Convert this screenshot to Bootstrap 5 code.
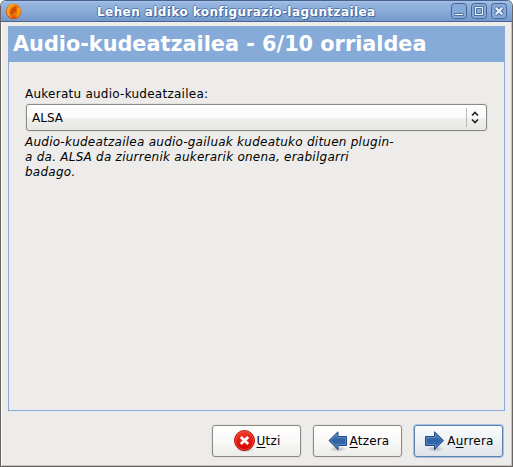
<!DOCTYPE html>
<html lang="eu">
<head>
<meta charset="utf-8">
<title>Lehen aldiko konfigurazio-laguntzailea</title>
<meta name="viewport" content="width=device-width, initial-scale=1">
<link href="https://cdn.jsdelivr.net/npm/bootstrap@5.3.0/dist/css/bootstrap.min.css" rel="stylesheet">
<style>
body{font:12px/15px "DejaVu Sans",sans-serif;color:#000;background:#fff}
.win{width:513px;height:467px;background:#edecea;border:1px solid #696565;border-top-color:#45618c;border-radius:6px 6px 0 0;box-shadow:inset 1px 0 #fbfafa,inset -1px -1px #c5c1c0}
.titlebar{height:21px;flex:none;background:linear-gradient(#a9c5eb 0,#98b6e0 2px,#84a8d6 12px,#7499ca);border-bottom:1px solid #46658f;border-radius:5px 5px 0 0;padding:0 5px 0 4px}
.caption{font-weight:bold;font-size:12px;letter-spacing:.42px;color:#fff;text-shadow:1px 1px #3f66a0,-1px 0 #5479ae,0 -1px #5479ae;white-space:nowrap;padding:2px 0 0 92px;margin-left:-17px}
.winbtn{width:16px;height:16px;display:block}
.wizard{margin:4px 7px 0;height:385px;border:1px solid #86abd9;flex:none}
.heading{height:35px;background:#86abd9;color:#fff;font-weight:bold;font-size:20.8px;line-height:34px;padding-left:4px;margin:0;white-space:nowrap}
.page-body{padding:25px 17px 0 16px}
.field-label,.hint{letter-spacing:.25px}
.combo{height:27px;border:1px solid #8b8984;border-radius:3px;background:linear-gradient(#fff,#fafafa 50%,#f0f0ee 51%,#e6e6e3);margin:2px 0 0 1px;padding-left:5px;box-shadow:0 0 0 1px #e3e2df}
.combo .choice{padding-top:1px}
.divider{width:1px;height:19px;background:#b9b8b5}
.hint{font-style:italic;margin:4px 0 0;white-space:nowrap}
.actions{gap:12px;padding:14px 9px 0 0}
.actions .btn{width:89px;height:32px;padding:0;border:1px solid #8b8984;border-radius:3px;background:linear-gradient(#fff,#f9f9f8 50%,#ececea);font:12px/15px "DejaVu Sans",sans-serif;letter-spacing:.2px;color:#000;box-shadow:0 0 0 1px #e3e2df}
.actions .btn.next{border-color:#5d7fae;background:linear-gradient(#fafcfe,#eef1f5 50%,#dfe4ea);box-shadow:0 0 0 1px #a9c3e6}
.actions u{text-underline-offset:2px;text-decoration-thickness:1px;text-decoration-skip-ink:none}
</style>
<script src="https://cdn.jsdelivr.net/npm/bootstrap@5.3.0/dist/js/bootstrap.bundle.min.js"></script>
</head>
<body class="overflow-hidden">
<svg width="0" height="0" class="position-absolute"><defs>
<radialGradient id="orb" cx=".6" cy=".4"><stop offset="0" stop-color="#e55b00"/><stop offset=".55" stop-color="#f07f08"/><stop offset="1" stop-color="#d95108"/></radialGradient>
<linearGradient id="red" x2="0" y2="1"><stop stop-color="#f43a25"/><stop offset="1" stop-color="#d50000"/></linearGradient>
<linearGradient id="blue" x2="0" y2="1"><stop stop-color="#4d7db8"/><stop offset=".5" stop-color="#2f62a3"/><stop offset="1" stop-color="#3f72b0"/></linearGradient>
<radialGradient id="shade"><stop stop-color="#000" stop-opacity=".25"/><stop offset="1" stop-color="#000" stop-opacity="0"/></radialGradient>
</defs></svg>
<main class="win d-flex flex-column">
  <header class="titlebar d-flex align-items-center">
    <svg width="17" height="17" viewBox="0 0 17 17"><circle cx="8.5" cy="8.5" r="7.7" fill="url(#orb)"/><path d="M2 6C3 2 7 0 11 1.500Q5 3 4.500 8T8 15Q0 13 2 6" fill="#f7a51c"/><path d="M15 5Q17 11 11 15 13 10 12 5z" fill="#f3a014"/><path d="M11 4Q5 5 6 11 11 10 11 4z" fill="#d94d00" stroke="#b84300" stroke-width=".7"/></svg>
    <span class="caption">Lehen aldiko konfigurazio-laguntzailea</span>
    <span class="d-flex ms-auto gap-1">
      <svg class="winbtn" viewBox="0 0 16 16"><rect x=".5" y=".5" width="15" height="15" rx="3" fill="#86a9d8" stroke="#446797"/><path d="M3.500 10.500h9v2h-9z" fill="#fff" stroke="#4c71a5"/></svg>
      <svg class="winbtn" viewBox="0 0 16 16"><rect x=".5" y=".5" width="15" height="15" rx="3" fill="#86a9d8" stroke="#446797"/><path d="M3.500 3.500h9v9h-9z" fill="#e9f0f9" stroke="#4c71a5"/><path d="M5.500 5.500h5v5h-5z" fill="#86a9d8" stroke="#4c71a5"/></svg>
      <svg class="winbtn" viewBox="0 0 16 16"><rect x=".5" y=".5" width="15" height="15" rx="3" fill="#86a9d8" stroke="#446797"/><path d="M4.500 4.500l7 7m0-7l-7 7" stroke="#4c71a5" stroke-width="4.200"/><path d="M4.800 4.800l6.400 6.400m0-6.400l-6.400 6.400" stroke="#e9f0f9" stroke-width="2.200"/></svg>
    </span>
  </header>
  <section class="wizard">
    <h1 class="heading">Audio-kudeatzailea - 6/10 orrialdea</h1>
    <div class="page-body">
      <div class="field-label">Aukeratu audio-kudeatzailea:</div>
      <div class="combo d-flex align-items-center" role="combobox">
        <span class="choice me-auto">ALSA</span><span class="divider"></span>
        <svg width="19" height="19" viewBox="0 0 19 19"><path d="M5 7.500l3-3 3 3M5 11.500l3 3 3-3" fill="none" stroke="#222" stroke-width="1.600"/></svg>
      </div>
      <p class="hint">Audio-kudeatzailea audio-gailuak kudeatuko dituen plugin-<br>a da. ALSA da ziurrenik aukerarik onena, erabilgarri<br>badago.</p>
    </div>
  </section>
  <footer class="actions d-flex justify-content-end">
    <button class="btn d-flex align-items-center justify-content-center"><svg width="24" height="24" viewBox="0 0 24 24"><ellipse cx="12" cy="20.500" rx="10" ry="3" fill="url(#shade)"/><circle cx="11.500" cy="11.500" r="10" fill="url(#red)" stroke="#b80d08"/><circle cx="11.500" cy="11.500" r="9" fill="none" stroke="#f46659" stroke-opacity=".6"/><path d="M7.800 8l7.400 7m0-7l-7.400 7" stroke="#fff" stroke-width="2.800"/></svg><span><u>U</u>tzi</span></button>
    <button class="btn d-flex align-items-center justify-content-center"><svg width="24" height="24" viewBox="0 0 24 24"><ellipse cx="12" cy="20" rx="9" ry="3" fill="url(#shade)"/><path d="M3 11.500L12 2.800V7.500h8.500v9H12v4.200z" fill="url(#blue)" stroke="#204a87"/><path d="M4.500 11.500l6.500-6.300v3.300h8.500v7H11v2.700z" fill="none" stroke="#739cce" stroke-opacity=".6"/></svg><span><u>A</u>tzera</span></button>
    <button class="btn next d-flex align-items-center justify-content-center"><svg width="24" height="24" viewBox="0 0 24 24"><ellipse cx="12" cy="20" rx="9" ry="3" fill="url(#shade)"/><path d="M20.500 11.500L11.500 2.800V7.500h-9v9h9v4.200z" fill="url(#blue)" stroke="#204a87"/><path d="M19 11.500l-6.500-6.300v3.300h-9v7h9v2.700z" fill="none" stroke="#739cce" stroke-opacity=".6"/></svg><span>A<u>u</u>rrera</span></button>
  </footer>
</main>
</body>
</html>
